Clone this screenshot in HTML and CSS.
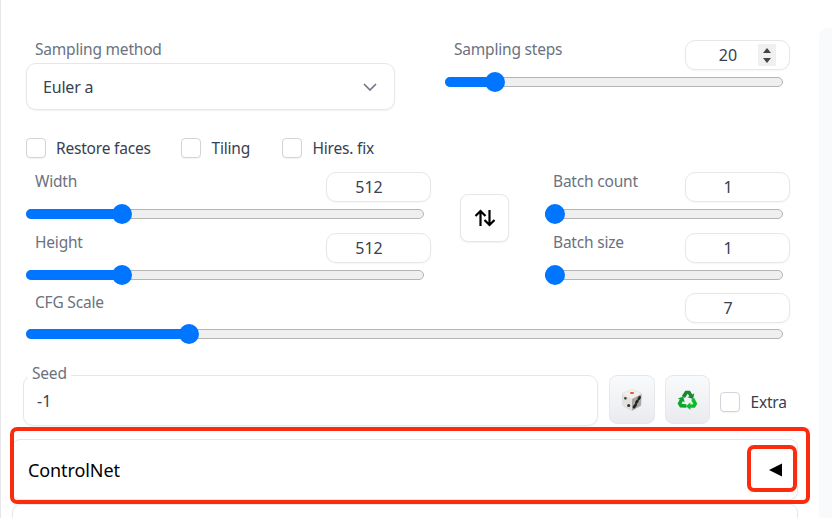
FILE: index.html
```html
<!DOCTYPE html>
<html lang="en">
<head>
<meta charset="utf-8">
<title>txt2img settings</title>
<link rel="stylesheet" href="styles.css">
</head>
<body>
<div class="shell">
  <main class="main">
    <section class="settings">
      <div class="row-sampling">
        <div class="method">
          <label class="label method-label">Sampling method</label>
          <div class="select">
            <span>Euler a</span>
            <svg class="chevron" width="14" height="8" viewBox="0 0 14 8"><path d="M1 1l6 6 6-6" fill="none" stroke="#6b7280" stroke-width="1.6"/></svg>
          </div>
        </div>
        <div class="control">
          <div class="control-head">
            <span class="label">Sampling steps</span>
            <div class="number"><span>20</span>
              <span class="spin"><i class="up"></i><i class="down"></i></span>
            </div>
          </div>
          <div class="slider"><div class="fill" style="width:50px"></div><div class="thumb" style="left:50px"></div></div>
        </div>
      </div>

      <div class="checks">
        <label class="check check-restore"><span class="box"></span>Restore faces</label>
        <label class="check check-tiling"><span class="box"></span>Tiling</label>
        <label class="check"><span class="box"></span>Hires. fix</label>
      </div>

      <div class="row-size">
        <div class="stack">
          <div class="control">
            <div class="control-head">
              <span class="label">Width</span>
              <div class="number"><span>512</span></div>
            </div>
            <div class="slider"><div class="fill" style="width:96px"></div><div class="thumb" style="left:96px"></div></div>
          </div>
          <div class="control">
            <div class="control-head">
              <span class="label">Height</span>
              <div class="number"><span>512</span></div>
            </div>
            <div class="slider"><div class="fill" style="width:96px"></div><div class="thumb" style="left:96px"></div></div>
          </div>
        </div>
        <button class="swap" type="button" aria-label="Swap">
          <svg width="22" height="18" viewBox="0 0 22 18"><path d="M6.500 17V2M1.500 7l5-5 5 5M15.500 1v15M10.500 11l5 5 5-5" fill="none" stroke="#000" stroke-width="2.200"/></svg>
        </button>
        <div class="stack stack-batch">
          <div class="control">
            <div class="control-head">
              <span class="label">Batch count</span>
              <div class="number"><span>1</span></div>
            </div>
            <div class="slider"><div class="fill" style="width:10px"></div><div class="thumb" style="left:10px"></div></div>
          </div>
          <div class="control">
            <div class="control-head">
              <span class="label">Batch size</span>
              <div class="number"><span>1</span></div>
            </div>
            <div class="slider"><div class="fill" style="width:10px"></div><div class="thumb" style="left:10px"></div></div>
          </div>
        </div>
      </div>

      <div class="control control-cfg">
        <div class="control-head">
          <span class="label">CFG Scale</span>
          <div class="number"><span>7</span></div>
        </div>
        <div class="slider"><div class="fill" style="width:163px"></div><div class="thumb" style="left:163px"></div></div>
      </div>

      <div class="row-seed">
        <div class="seed">
          <span class="seed-label">Seed</span>
          <span class="seed-value">-1</span>
        </div>
        <button class="tool" type="button" aria-label="Random seed">
          <svg width="22" height="22" viewBox="0 0 20 20">
            <path d="M10 1l8 3.500-.5 10L10 19l-7.500-4.500L2 4.500z" fill="#cfcdc9" stroke="#cfcdc9" stroke-width="2" stroke-linejoin="round"/>
            <path d="M10 .5l8.500 4L10 9 1.500 4.500z" fill="#f1efec" stroke="#f1efec" stroke-linejoin="round"/>
            <path d="M10 9l8.500-4.500-.5 10.500L10 19.500z" fill="#a9a7a3"/>
            <path d="M1.500 4.500L10 9v10.500L2 15z" fill="#e4e2de"/>
            <rect x="8.200" y="3" width="3.600" height="1.400" rx=".7" fill="#e8261a"/>
            <circle cx="4" cy="8.500" r="1.200" fill="#444"/><circle cx="7" cy="15" r="1.400" fill="#333"/>
            <path d="M11.800 16.500l1.600-2.200M14 12.200l1-1.400M16.200 8.800l.8-1.200" stroke="#222" stroke-width="2.400" stroke-linecap="round"/>
          </svg>
        </button>
        <button class="tool" type="button" aria-label="Reuse seed">
          <svg width="25" height="25" viewBox="0 0 22 22">
            <defs><path id="chase" d="M6 8 9 3.200h4.200l2 3.400 1.700-1-.9 5-5-1.500 1.700-1L11.200 6 8.700 9.600z"/></defs>
            <use href="#chase" fill="#17892e"/>
            <use href="#chase" fill="#0bbd2b" transform="rotate(120 11 12)"/>
            <use href="#chase" fill="#0aa62c" transform="rotate(240 11 12)"/>
          </svg>
        </button>
        <label class="check check-extra"><span class="box"></span>Extra</label>
      </div>
    </section>

    <section class="card card-net">
      <span class="card-title">ControlNet</span>
      <svg class="caret" width="14" height="14" viewBox="0 0 14 14"><path d="M0 7L13 .5v13z" fill="#000"/></svg>
      <span class="mark mark-caret"></span>
    </section>
    <section class="card card-next"></section>
    <span class="mark mark-card"></span>
  </main>
  <aside class="side"></aside>
</div>
</body>
</html>
```

FILE: styles.css
```css
* { box-sizing: border-box; }
html, body { margin: 0; padding: 0; height: 518px; overflow: hidden; background: #fff; }
body { font-family: "Noto Sans", "Open Sans", sans-serif; font-size: 15px; color: #374151; }

.shell { display: flex; height: 518px; overflow: hidden; border-left: 1px solid #e5e7eb; }
.main { position: relative; width: 818px; padding-left: 11px; flex: none; }
.side { flex: 1; margin-top: 28px; background: #f9fafb; border-top-left-radius: 8px; }

.settings { padding: 40px 29px 0 14px; }

.label { color: #6b7280; font-size: 15.500px; letter-spacing: -.2px; line-height: 19px; }

.row-sampling { display: grid; grid-template-columns: 369px 345px; column-gap: 50px; }
.method-label { display: block; height: 23px; padding-left: 9px; line-height: 18px; }
.select {
  height: 47px; display: flex; align-items: center; justify-content: space-between;
  padding: 0 17px 0 16px; background: #fff; border: 1px solid #e5e7eb; border-radius: 10px;
  box-shadow: 0 1px 2px rgba(0,0,0,.06); color: #374151; font-size: 16px; letter-spacing: -.2px;
}

.control-head { display: flex; justify-content: space-between; height: 30px; padding-left: 9px; }
.control-head .label { line-height: 18px; }
.number {
  position: relative; width: 105px; height: 30px; display: flex; align-items: center; justify-content: center;
  background: #fff; border: 1px solid #e5e7eb; border-radius: 10px; box-shadow: 0 1px 2px rgba(0,0,0,.04);
  color: #374151; font-size: 16px; padding-right: 19px;
}
.spin {
  position: absolute; right: 13px; top: 3px; width: 18px; height: 22px; background: #f0f0f0;
  display: flex; flex-direction: column; align-items: center; justify-content: center; gap: 5px;
}
.spin i { width: 0; height: 0; border-left: 4.500px solid transparent; border-right: 4.500px solid transparent; }
.spin .up { border-bottom: 5px solid #444; }
.spin .down { border-top: 5px solid #444; }

.slider {
  position: relative; height: 10px; margin: 7px 7px 0 0; background: #efefef;
  border: 1px solid #b4b4b4; border-radius: 5px;
}
.fill { position: absolute; left: -1px; top: -1px; height: 10px; background: #0075ff; border-radius: 5px 0 0 5px; }
.thumb { position: absolute; top: 4px; width: 20px; height: 20px; margin: -10px 0 0 -11px; background: #0075ff; border-radius: 50%; }

.checks { display: flex; margin-top: 28px; height: 20px; align-items: center; }
.check { display: flex; align-items: center; color: #374151; font-size: 15.500px; letter-spacing: -.2px; white-space: nowrap; }
.box {
  width: 20px; height: 20px; margin-right: 10.500px; flex: none; background: #fff;
  border: 1px solid #d1d5db; border-radius: 4px; box-shadow: 0 1px 1px rgba(0,0,0,.05);
}
.check-restore { width: 155px; }
.check-restore .box { margin-right: 10px; }
.check-tiling { width: 101px; }

.row-size { display: grid; grid-template-columns: 405px 29px 49px 281px; margin-top: 14px; }
.stack { display: flex; flex-direction: column; gap: 14px; }
.stack-batch { grid-column: 4; margin-left: 36px; width: 245px; }
.stack-batch .control-head { padding-left: 8px; }
.swap {
  grid-column: 3; width: 49px; height: 48px; margin-top: 22px; padding: 0;
  display: flex; align-items: center; justify-content: center;
  background: #fff; border: 1px solid #e5e7eb; border-radius: 8px; box-shadow: 0 1px 2px rgba(0,0,0,.06);
}

.control-cfg { margin-top: 13px; }
.control-cfg .slider { margin-top: 6px; }

.row-seed { display: flex; align-items: flex-start; margin: 36px 0 0 -3px; width: 767px; }
.seed {
  position: relative; width: 575px; height: 51px; display: flex; align-items: center; padding: 0 13px;
  border: 1px solid #e5e7eb; border-radius: 10px; background: #fff; box-shadow: 0 1px 2px rgba(0,0,0,.04);
}
.seed-label {
  position: absolute; left: 4px; top: -13px; padding: 0 4px; background: #fff;
  color: #6b7280; font-size: 15.500px; line-height: 20px; letter-spacing: -.2px;
}
.seed-value { color: #374151; font-size: 16px; position: relative; top: 0; }
.tool {
  width: 46px; height: 49px; margin-left: 11px; padding: 0; display: flex; align-items: center; justify-content: center;
  background: linear-gradient(to bottom, #f9fafb, #e9ebef); border: 1px solid #e5e7eb; border-radius: 8px;
}
.tool + .tool { margin-left: 10px; width: 45px; }
.check-extra { margin: 16px 0 0 10px; }

.card { position: relative; width: 786px; background: #fff; border: 1px solid #e5e7eb; border-radius: 8px; }
.card-net { height: 61px; margin-top: 13px; display: flex; align-items: center; justify-content: space-between; padding: 0 14px 0 15px; }
.card-title { color: #000; font-size: 18px; letter-spacing: -.1px; }
.caret { display: block; }
.card-next { height: 60px; margin-top: 4px; }

.mark { position: absolute; border: 4px solid #fb2c0e; pointer-events: none; }
.mark-card { left: 9px; top: 427px; width: 800px; height: 77px; border-radius: 7px; }
.mark-caret { right: 0; top: 5px; width: 50px; height: 47px; border-radius: 7px; }
```
